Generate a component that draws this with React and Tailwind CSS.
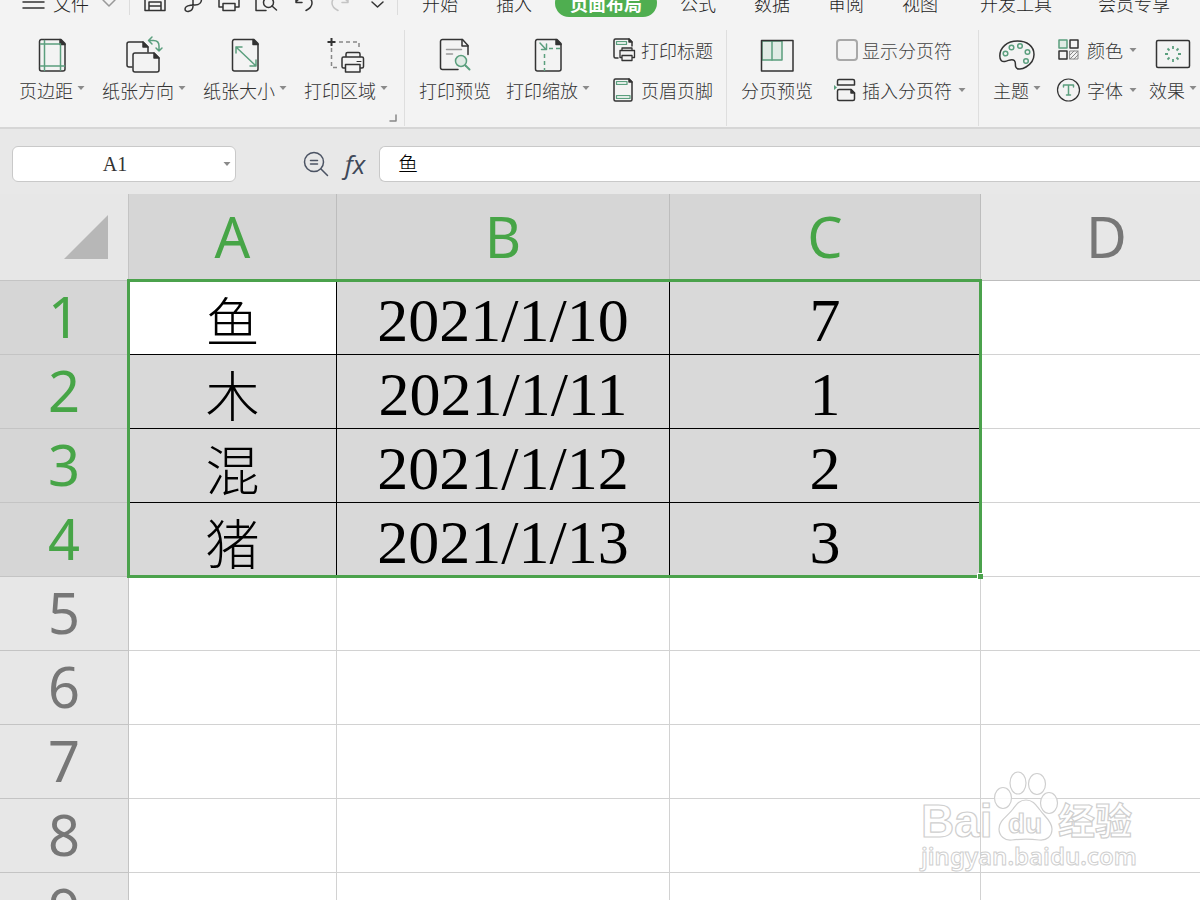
import { useState } from "react";

const DARK = "#333";
const GREEN = "#5b9f7e";
const PALE = "#e0ebe5";

const columns = [
  { name: "A", selected: true },
  { name: "B", selected: true },
  { name: "C", selected: true },
  { name: "D", selected: false },
];

const data = [
  ["鱼", "2021/1/10", "7"],
  ["木", "2021/1/11", "1"],
  ["混", "2021/1/12", "2"],
  ["猪", "2021/1/13", "3"],
  [],
  [],
  [],
  [],
  [],
];

const tabs = ["开始", "插入", "页面布局", "公式", "数据", "审阅", "视图", "开发工具", "会员专享"];

function Icon({ children, className = "h-9 w-9", box = "0 0 36 36", color = DARK }) {
  return (
    <svg className={`shrink-0 overflow-visible ${className}`} viewBox={box} fill="none" stroke={color} strokeWidth="1.5" strokeLinecap="round" strokeLinejoin="round" aria-hidden="true">
      {children}
    </svg>
  );
}

function Caret({ className = "" }) {
  return (
    <svg className={`h-1 w-2 shrink-0 ${className}`} viewBox="0 0 8 4" aria-hidden="true">
      <path d="M.5 0h7L4 4z" fill="#8a8a8a" />
    </svg>
  );
}

function Page() {
  return (
    <>
      <path d="M7 3.5h20l4 4V33a2 2 0 0 1-2 2H7.500a2 2 0 0 1-2-2V5.500a2 2 0 0 1 1.500-2z" />
      <path d="M26 3.500v5h5z" fill={DARK} />
    </>
  );
}

function BigButton({ icon, label, menu }) {
  return (
    <button className="flex shrink-0 flex-col items-center gap-1.5">
      {icon}
      <span className="flex h-6 gap-1 whitespace-nowrap leading-6">
        {label}
        {menu && <Caret className="mt-2" />}
      </span>
    </button>
  );
}

function SmallButton({ icon, label, menu }) {
  return (
    <button className="flex h-6 shrink-0 items-center gap-1.5 whitespace-nowrap leading-6">
      {icon}
      <span>{label}</span>
      {menu && <Caret />}
    </button>
  );
}

function MarginsIcon() {
  return (
    <Icon>
      <Page />
      <path stroke={GREEN} d="M10.500 4.500v30M26.500 9v25M6.500 8h20M6.500 30h24" />
    </Icon>
  );
}

function OrientationIcon() {
  return (
    <Icon>
      <path d="M6 31H3a2 2 0 0 1-2-2V8a2 2 0 0 1 2-2h14l5 5v5" />
      <path d="M17 6v5h5z" fill={DARK} />
      <path d="M9 17h19l5 5v12a2 2 0 0 1-2 2H9a2 2 0 0 1-2-2V19a2 2 0 0 1 2-2z" />
      <path d="M28 17v5h5z" fill={DARK} />
      <path stroke={GREEN} d="M22.500 4.500h5c4 0 5.500 2 5.500 5.500v5M26 1l-3.500 3.500L26 8M30 12l3 3 3-3" />
    </Icon>
  );
}

function SizeIcon() {
  return (
    <Icon>
      <Page />
      <path stroke={GREEN} d="M9 11l20 19M9 17v-6h6M29 24v6h-6" />
    </Icon>
  );
}

function AreaIcon() {
  return (
    <Icon>
      <path stroke="#888" strokeDasharray="4 3" strokeLinecap="butt" d="M11 6h20v8M3.500 12v19.500H12" />
      <path d="M3.500 2v8M-.5 6h8" strokeLinecap="butt" strokeWidth="2" />
      <path d="M18 20.500V18a1.500 1.500 0 0 1 1.500-1.500h11A1.500 1.500 0 0 1 32 18v2.500" />
      <path d="M17 32h-1.500a1.500 1.500 0 0 1-1.500-1.500v-8a1.500 1.500 0 0 1 1.500-1.500h18.500a1.500 1.500 0 0 1 1.500 1.500v8A1.500 1.500 0 0 1 34 32h-1.500" />
      <path d="M17.500 28.500h14.500V36H17.500z" />
      <path d="M29 25.500h4" strokeWidth="1" />
    </Icon>
  );
}

function PreviewIcon() {
  return (
    <Icon>
      <path d="M21 33.500H5.500a2 2 0 0 1-2-2v-26a2 2 0 0 1 2-2h20l5.500 6v9" />
      <path d="M25 3.500V10h6" />
      <path stroke="#999" d="M9.500 13.500h15M9.500 18h6" />
      <circle cx="24" cy="25" r="5.500" stroke={GREEN} fill={PALE} />
      <path stroke={GREEN} strokeWidth="2" d="M28.500 29.500l4 4" />
    </Icon>
  );
}

function ScaleIcon() {
  return (
    <Icon>
      <Page />
      <path stroke={GREEN} d="M10 7l6 6.500M11.500 13.500h5V8" />
      <path stroke={GREEN} strokeDasharray="4 3" strokeLinecap="butt" d="M19 12.500h12M14.500 18v17" />
    </Icon>
  );
}

function TitleIcon() {
  return (
    <Icon className="h-6 w-[22px]" box="0 0 22 24">
      <path d="M5 20H2.500A1.500 1.500 0 0 1 1 18.500v-16A1.500 1.500 0 0 1 2.500 1H16l3 3v4" />
      <path d="M16 1v3h3z" fill={DARK} />
      <path d="M3.500 3.500h10v3h-10z" stroke={GREEN} fill={PALE} strokeWidth="1.200" />
      <path d="M9 12.500V10h10v2.500M8.500 19.500H7v-7h14.500v7h-2M9 17.500h10v5H9z" strokeWidth="1.300" />
    </Icon>
  );
}

function HeaderFooterIcon() {
  return (
    <Icon className="h-6 w-[22px]" box="0 0 22 24">
      <path d="M2.500 1H16l3 3v17.500a1.500 1.500 0 0 1-1.500 1.500h-15A1.500 1.500 0 0 1 1 21.500v-19A1.500 1.500 0 0 1 2.500 1z" />
      <path d="M16 1v3h3z" fill={DARK} />
      <path d="M3.500 3.500H14v3H3.500zM3.500 17.500H17v3H3.500z" stroke={GREEN} fill={PALE} strokeWidth="1.200" />
    </Icon>
  );
}

function PageBreakPreviewIcon() {
  return (
    <Icon>
      <path d="M3 5h20v19H3z" fill={PALE} stroke={GREEN} />
      <path d="M13 5v19" stroke={GREEN} />
      <path d="M2.500 4.500h31.500V35H2.500z" />
    </Icon>
  );
}

function InsertBreakIcon() {
  return (
    <Icon className="h-6 w-[22px]" box="0 0 22 24">
      <path d="M3.500 7V3A1.500 1.500 0 0 1 5 1.500h14A1.500 1.500 0 0 1 20.500 3v4z" />
      <path d="M5 11.500h12l3.500 3.500v6a1.500 1.500 0 0 1-1.500 1.500H5A1.500 1.500 0 0 1 3.500 21v-8A1.500 1.500 0 0 1 5 11.500z" />
      <path d="M17 11.500V15h3.500z" fill={DARK} />
      <path d="M0 7l3 2.500L0 12z" fill={GREEN} stroke="none" />
    </Icon>
  );
}

function ThemeIcon() {
  return (
    <Icon>
      <path d="M18.500 5C8 5 .8 11.500.8 20c0 4 2 6 5 5.500 4-.7 7-3.500 9.500-1 2 2 .5 4 1.500 6.500C18 34 23 33.500 27 31c5-3 8-7 8-12.500C35 10 28 5 18.500 5z" />
      <g stroke={GREEN}>
        <circle cx="6.500" cy="17.500" r="2.300" />
        <circle cx="12.500" cy="11.500" r="2.300" />
        <circle cx="21" cy="10" r="2.300" />
        <circle cx="28.500" cy="16" r="2.300" />
        <circle cx="27" cy="25" r="2.300" />
      </g>
    </Icon>
  );
}

function ColorsIcon() {
  return (
    <Icon className="h-6 w-6" box="0 0 24 24">
      <path d="M2 2h8v8H2z" stroke={GREEN} fill={PALE} />
      <path d="M13 2h8v8h-8zM2 13h8v8H2z" />
      <path d="M13 13h8v8h-8zM13 17l4-4M13 21l8-8M17 21l4-4" stroke="#888" strokeWidth="1" />
    </Icon>
  );
}

function FontsIcon() {
  return (
    <Icon className="h-6 w-6" box="0 0 24 24">
      <circle cx="11.500" cy="12" r="11" strokeWidth="1.200" />
      <path stroke={GREEN} d="M6.500 9V7h10v2M11.500 7v10M9.500 17h4" />
    </Icon>
  );
}

function EffectsIcon() {
  return (
    <Icon>
      <rect x="1.500" y="4.500" width="33" height="27" rx="1.500" />
      <path stroke={GREEN} strokeLinecap="butt" strokeWidth="1.800" d="M18 10v3M18 23v3M10 18h3M23 18h3M12.500 12.500l2 2M21.500 21.500l2 2M12.500 23.500l2-2M21.500 14.500l2-2" />
    </Icon>
  );
}

function QuickAccess() {
  const box = "h-6 w-6";
  return (
    <div className="flex shrink-0 items-center gap-[13px] border-x border-[#dcdcdc] pr-2 pl-[13px]">
      <button aria-label="保存">
        <Icon className={box} box="0 0 24 24">
          <path d="M2 3h17l3 3v13.500H2zM6 19v-8h12v8M6 15h12" />
        </Icon>
      </button>
      <button aria-label="输出为PDF">
        <Icon className={box} box="0 0 24 24">
          <path d="M13 3v12c0 6-8 7-8 3 0-3 5-4 10-4 9 0 8-11 1-11" />
        </Icon>
      </button>
      <button aria-label="打印">
        <Icon className={box} box="0 0 24 24">
          <path d="M6 8V2h12v6M5.500 16H2V8h20v8h-3.500M6 12.500h12v7H6z" />
        </Icon>
      </button>
      <button aria-label="打印预览">
        <Icon className={box} box="0 0 24 24">
          <path d="M12 19.500H2V2h16v3" />
          <circle cx="14.500" cy="11.500" r="5" />
          <path d="M18 15l4.500 4" />
        </Icon>
      </button>
      <button aria-label="撤销">
        <Icon className={box} box="0 0 24 24">
          <path d="M5 6v5.500h6M5 11c5-7 16-6 16 1 0 4-3 6-6 7.500" />
        </Icon>
      </button>
      <button aria-label="恢复" disabled>
        <Icon className={box} box="0 0 24 24" color="#c4c4c4">
          <path d="M20 6v5.500h-6M20 11C15 4 4 5 4 12c0 4 3 6 6 7.500" />
        </Icon>
      </button>
      <button aria-label="自定义快速访问工具栏">
        <Icon className={box} box="0 0 24 24">
          <path d="M7 11l5.500 5 5.500-5" />
        </Icon>
      </button>
    </div>
  );
}

function MenuBar() {
  const [active, setActive] = useState("页面布局");

  return (
    <nav className="-mt-5 flex h-[46px] shrink-0 items-center text-[#222]">
      <button className="flex w-[129px] shrink-0 items-center gap-2 pl-[22px]">
        <Icon className="h-5 w-[23px]" box="0 0 23 20">
          <path d="M1 3h21M1 9h21M1 15h21" />
        </Icon>
        文件
        <Icon className="ml-1 h-2 w-4" box="0 0 16 8" color="#999">
          <path d="M2 1l6 6 6-6" />
        </Icon>
      </button>
      <QuickAccess />
      <div className="flex items-center gap-2 pl-[9px]">
        {tabs.map((tab) => (
          <button
            key={tab}
            onClick={() => setActive(tab)}
            className={`h-7 shrink-0 whitespace-nowrap rounded-full ${
              tab === active
                ? "bg-[#4fae50] px-[15px] font-bold text-white"
                : tab.length > 2
                  ? "px-[19px]"
                  : "px-[15px]"
            }`}
          >
            {tab}
          </button>
        ))}
      </div>
    </nav>
  );
}

function Ribbon() {
  const group = "flex h-24 shrink-0 items-start border-r border-[#dedede] pt-1.5";
  const stack = "mt-0.5 flex shrink-0 flex-col items-start gap-4";

  return (
    <div className="flex h-[103px] shrink-0 border-b-2 border-[#d6d6d6] pt-1 text-[#333]">
      <div className={`${group} gap-[17px] pl-[19px]`}>
        <BigButton icon={<MarginsIcon />} label="页边距" menu />
        <BigButton icon={<OrientationIcon />} label="纸张方向" menu />
        <BigButton icon={<SizeIcon />} label="纸张大小" menu />
        <BigButton icon={<AreaIcon />} label="打印区域" menu />
        <button aria-label="页面设置" className="-ml-4 mr-[7px] mb-1 self-end">
          <Icon className="h-2 w-2" box="0 0 8 8" color="#888">
            <path d="M7 1v6H1" />
          </Icon>
        </button>
      </div>
      <div className={`${group} pr-[13px] pl-3.5`}>
        <BigButton icon={<PreviewIcon />} label="打印预览" />
        <div className="w-[15px]" />
        <BigButton icon={<ScaleIcon />} label="打印缩放" menu />
        <div className={`${stack} ml-[23px]`}>
          <SmallButton icon={<TitleIcon />} label="打印标题" />
          <SmallButton icon={<HeaderFooterIcon />} label="页眉页脚" />
        </div>
      </div>
      <div className={`${group} gap-[21px] pr-3 pl-3.5`}>
        <BigButton icon={<PageBreakPreviewIcon />} label="分页预览" />
        <div className={stack}>
          <label className="flex h-6 items-center gap-1 whitespace-nowrap pl-0.5 text-[#444]">
            <input type="checkbox" className="h-[22px] w-[22px] appearance-none rounded-sm border-2 border-[#a8a8a8] checked:bg-[#5b9f7e]" />
            显示分页符
          </label>
          <SmallButton icon={<InsertBreakIcon />} label="插入分页符" menu />
        </div>
      </div>
      <div className="flex shrink-0 items-start pt-1.5 pl-3.5">
        <BigButton icon={<ThemeIcon />} label="主题" menu />
        <div className={`${stack} mr-3 ml-4`}>
          <SmallButton icon={<ColorsIcon />} label="颜色" menu />
          <SmallButton icon={<FontsIcon />} label="字体" menu />
        </div>
        <BigButton icon={<EffectsIcon />} label="效果" menu />
      </div>
    </div>
  );
}

function FormulaBar() {
  const [cell, setCell] = useState("A1");
  const [value, setValue] = useState("鱼");

  return (
    <div className="flex h-[65px] shrink-0 items-center bg-[#e8e8e8] pt-1 pl-3">
      <div className="flex h-9 w-56 shrink-0 items-center rounded-md border border-[#c9c9c9] bg-white pr-1">
        <input
          aria-label="名称框"
          value={cell}
          onChange={(e) => setCell(e.target.value)}
          className="w-full min-w-0 pr-1.5 text-center font-['Liberation_Serif','Noto_Sans_CJK_SC',serif] text-xl text-[#333] outline-none"
        />
        <Caret />
      </div>
      <button aria-label="查找" className="ml-[67px] shrink-0">
        <Icon className="h-[26px] w-[26px]" box="0 0 26 26" color="#4b5363">
          <circle cx="11" cy="11" r="9.500" />
          <path d="M18 18l6.500 6.500M7.500 9.500h7M7.500 13h7" />
        </Icon>
      </button>
      <button
        aria-label="插入函数"
        className="ml-3 w-7 shrink-0 font-['Open_Sans',sans-serif] text-[26px] font-normal text-[#3f4858] italic"
      >
        fx
      </button>
      <input
        aria-label="编辑栏"
        value={value}
        onChange={(e) => setValue(e.target.value)}
        className="ml-2.5 h-9 min-w-0 flex-1 rounded-l-md border border-r-0 border-[#c9c9c9] bg-white px-[18px] text-xl font-light text-black outline-none"
      />
    </div>
  );
}

function Sheet() {
  return (
    <div className="relative min-h-0 flex-1 overflow-hidden bg-white">
      <table className="w-[1233px] table-fixed border-separate border-spacing-0">
        <colgroup>
          <col className="w-[129px]" />
          <col className="w-[208px]" />
          <col className="w-[333px]" />
          <col className="w-[311px]" />
          <col />
        </colgroup>
        <thead>
          <tr className="h-[87px] font-['Noto_Sans',sans-serif] text-[56px] leading-[72px]">
            <th className="border-r border-b border-[#c4c4c4] bg-[#e7e7e7] p-0">
              <svg className="mr-5 ml-auto h-11 w-11" viewBox="0 0 44 44" aria-hidden="true">
                <path d="M44 0v44H0z" fill="#b7b7b7" />
              </svg>
            </th>
            {columns.map((col) => (
              <th
                key={col.name}
                scope="col"
                className={`border-r border-b border-[#bdbdbd] p-0 pb-0.5 font-normal ${
                  col.selected ? "bg-[#d6d6d6] text-[#47a547]" : "bg-[#e7e7e7] text-[#777]"
                }`}
              >
                {col.name}
              </th>
            ))}
          </tr>
        </thead>
        <tbody>
          {data.map((row, r) => {
            const filled = row.length > 0;
            return (
              <tr key={r} className="h-[74px]">
                <th
                  scope="row"
                  className={`border-r border-b border-[#c4c4c4] p-0 pb-1 font-['Noto_Sans',sans-serif] text-[56px] leading-[68px] font-normal ${
                    filled ? "bg-[#d6d6d6] text-[#47a547]" : "bg-[#e7e7e7] text-[#777]"
                  }`}
                >
                  {r + 1}
                </th>
                {columns.map((col, c) => {
                  const inRange = filled && col.selected;
                  return (
                    <td
                      key={col.name}
                      className={`border-r border-b p-0 text-center ${
                        inRange ? "border-black text-black" : "border-[#d2d2d2]"
                      } ${inRange && (r > 0 || c > 0) ? "bg-[#d9d9d9]" : "bg-white"} ${
                        c === 0
                          ? "pt-1 text-[54px] leading-[68px] font-light"
                          : "pt-1 font-['Liberation_Serif',serif] text-[62px] leading-[68px]"
                      }`}
                    >
                      {row[c]}
                    </td>
                  );
                })}
              </tr>
            );
          })}
        </tbody>
      </table>

      {/* selection frame and fill handle, over A1:C4 */}
      <div className="pointer-events-none absolute top-[85px] left-[127px] h-[299px] w-[855px] border-3 border-[#4ba24c]">
        <div className="absolute -right-1 -bottom-1 h-1.5 w-1.5 border-t border-l border-white bg-[#4ba24c]" />
      </div>
    </div>
  );
}

function Watermark() {
  return (
    <svg
      className="pointer-events-none absolute right-[60px] bottom-6 h-[108px] w-[222px]"
      viewBox="0 0 222 108"
      fill="#fff"
      fillOpacity=".85"
      stroke="#cfcfcf"
      strokeWidth="1.2"
      fontFamily="'Liberation Sans', 'Noto Sans CJK SC', sans-serif"
      fontWeight="700"
    >
      <text x="3" y="69" fontSize="46">Bai</text>
      <ellipse cx="85" cy="30" rx="8.500" ry="10.500" />
      <ellipse cx="100" cy="15" rx="8" ry="11" />
      <ellipse cx="119" cy="16" rx="8.500" ry="10.500" />
      <ellipse cx="131" cy="35" rx="8.500" ry="10.500" />
      <path d="M108 32c-7 0-10 5-13 9-5 7-14 11-14 20 0 7 6 12 13 11 9-1 19-1 27 0 8 1 13-4 13-11 0-8-8-13-12-19-4-5-7-10-14-10z" />
      <text x="90" y="65" fontSize="28">du</text>
      <text x="140" y="67" fontSize="37">经验</text>
      <text x="3" y="97" fontSize="24" strokeWidth="1" fontFamily="'Noto Sans', sans-serif" fontWeight="600">
        jingyan.baidu.com
      </text>
    </svg>
  );
}

export default function App() {
  return (
    <div className="relative flex h-screen flex-col overflow-hidden bg-[#f3f3f3] font-['Noto_Sans_CJK_SC',sans-serif] text-lg leading-6 font-light">
      <MenuBar />
      <Ribbon />
      <FormulaBar />
      <Sheet />
      <Watermark />
    </div>
  );
}
